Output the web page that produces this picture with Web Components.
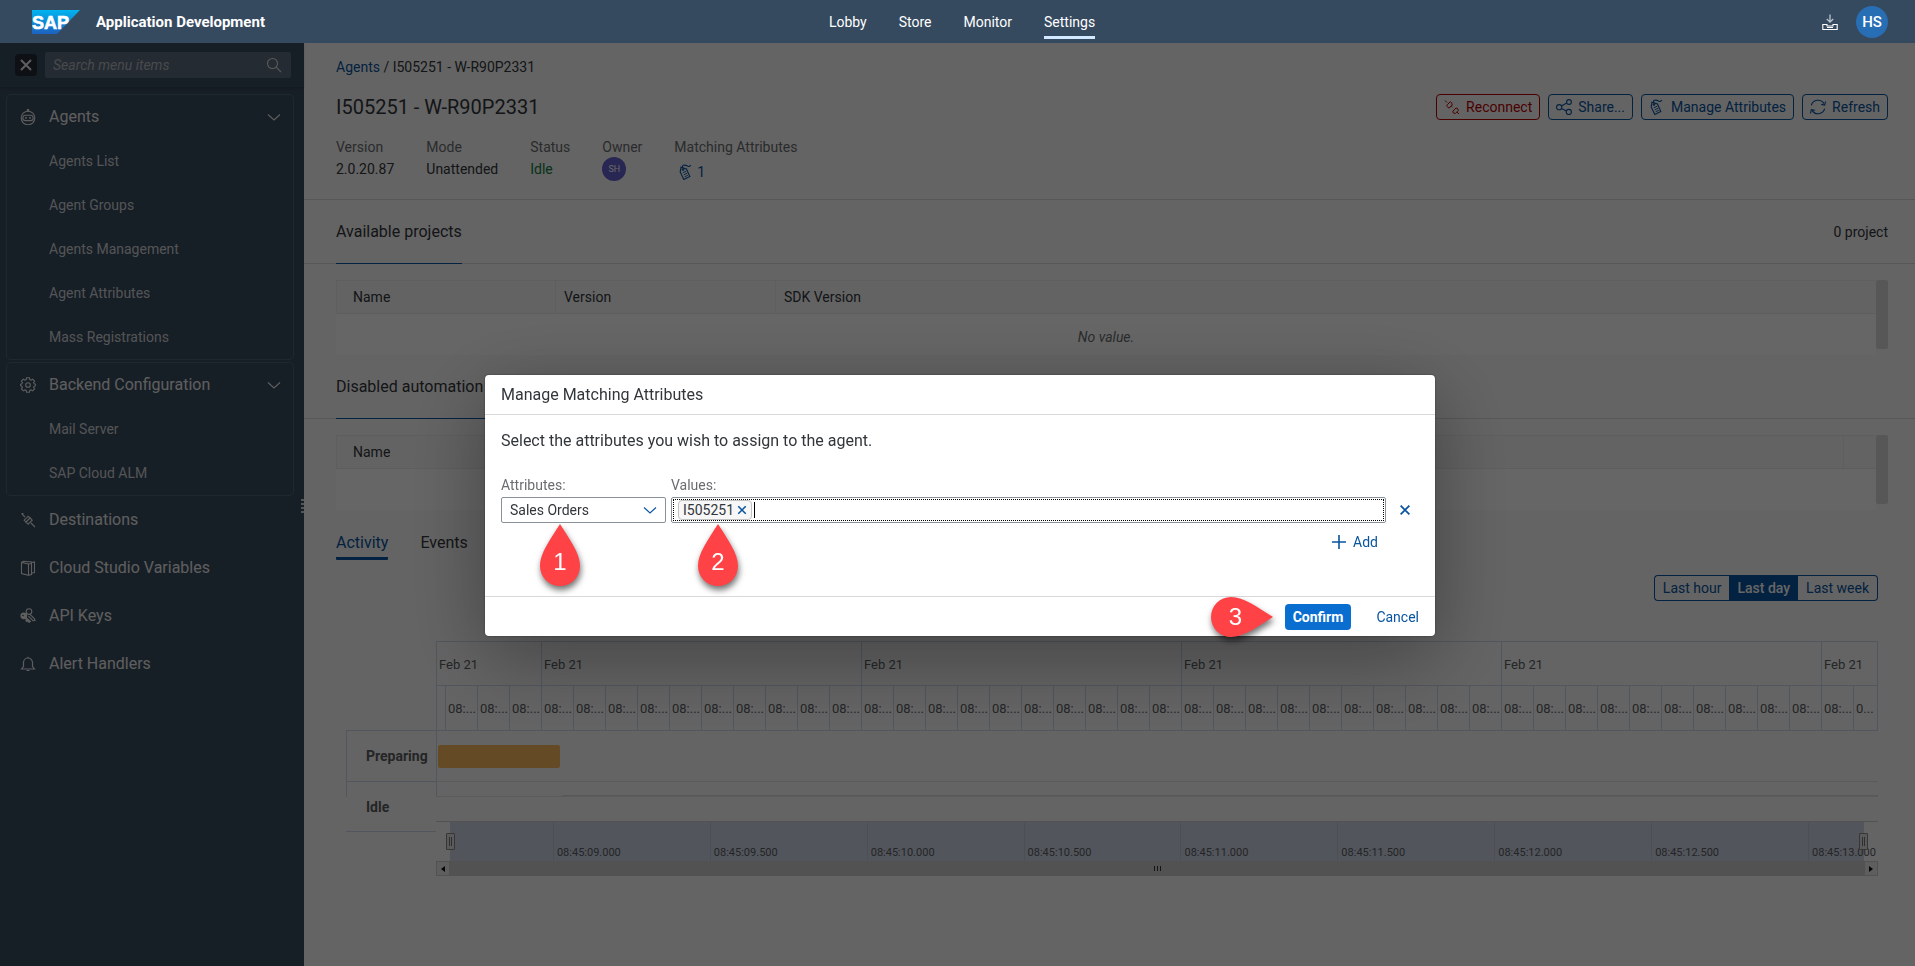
<!DOCTYPE html>
<html lang="en">
<head>
<meta charset="utf-8">
<meta name="viewport" content="width=device-width, initial-scale=1">
<title>Application Development</title>
<style>
  html, body { height: 100%; }
  body { margin: 0; font: 14px/20px Roboto, "Liberation Sans", sans-serif; color: #32363a; background: #fafafa; }
</style>
</head>
<body>
<app-shell></app-shell>

<script>
const define = (name, html, setup) => customElements.define(name, class extends HTMLElement {
  connectedCallback() {
    if (this.shadowRoot) return;
    const root = this.attachShadow({ mode: 'open' });
    root.innerHTML = '<style>*{box-sizing:border-box}</style>' + (typeof html === 'function' ? html(this) : html);
    if (setup) setup(root, this);
  }
});

/* Line icons on a 16 x 16 grid, drawn with the current colour */
const ICONS = {
  robot: '<circle cx="8" cy="9" r="6.800"/><circle cx="8" cy="1.200" r=".8" fill="currentColor"/><rect x="2.800" y="6.200" width="10.400" height="5.400" rx="2.700"/><path d="M5.200 8.900h1.600M9.200 8.900h1.600" stroke-width="1.800"/>',
  gear: '<circle cx="8" cy="8" r="2.300"/><path d="M6.600.8h2.800l.4 1.800 1.300.5 1.600-1 1.900 1.900-1 1.600.5 1.300 1.700.4v1.400l-1.700.4-.5 1.300 1 1.600-1.900 1.900-1.600-1-1.300.5-.4 1.800H6.600l-.4-1.800-1.300-.5-1.600 1L1.400 12l1-1.600-.5-1.300L.6 8.700V7.300l1.300-.4.5-1.300-1-1.600L3.300 2.100l1.600 1 1.300-.5z"/>',
  plug: '<path d="M1.500 1.500l3.500 3.500M11 11l4 4M4.200 8.200l4-4 1 1a2.500 2.500 0 0 1 2 2l1 1-4 4-1-1a3 3 0 0 1-2-2zM6 10l4-4M1.500 1.500h2"/>',
  books: '<path d="M1.500 2.500l2-1.300 8 .8v2M1.500 2.500v11l7 1.700V4zM8.500 4l3-.5M8.500 15.200l3-.7V3.500M11.500 2.500l3-.5v10.500l-3 .7"/>',
  keys: '<circle cx="9" cy="3.600" r="2.800"/><path d="M9.500 5.800l4.800 4.800.7 1.900-2 .2-4.600-4.600"/><circle cx="3.800" cy="7.800" r="2.400" fill="currentColor" stroke-width="2"/><path d="M5 9.500l5.500 4.500M7.500 11.500l-1.500 2M9.500 12.500l-1 2" stroke-width="2.200"/><circle cx="3" cy="7.500" r=".8" fill="#394b5f" stroke="none"/>',
  bell: '<path d="M1.500 13h13l-2-2.500V6.500a4.500 4.500 0 0 0-9 0v4zM6.500 14.500h3M8 .8v1.200" stroke-width="1.200"/>',
  search: '<circle cx="6.500" cy="6.500" r="5"/><path d="M10.200 10.200l4.800 4.800"/>',
  close: '<path d="M3 3l10 10M13 3L3 13" stroke-width="2"/>',
  chevron: '<path d="M2 5.500l6 5.500 6-5.500"/>',
  plus: '<path d="M8 1v14M1 8h14" stroke-width="1.600"/>',
  tray: '<path d="M8 .5v7M4.800 5L8 8l3.200-3" stroke="#b9c4cf" stroke-width="1.300"/><path d="M3 10.500H.8v5h14.400v-5H13M3 10.500h2v1.500h6v-1.500h2M5 13.500h6" stroke-width="1.100"/>',
  reconnect: '<path d="M1 1.500l2 2M3.200 5.800l3-3M3.200 5.800c-.8 1 .2 3 2 3.200l3-3C8 4 7 2.500 6.200 2.800M7.200 7l1.200 1.200M8.800 12.200l3.200-3.200 1.600.6.800 1.800-3.200 3.200-1.800-.6zM13 13l2 2" stroke-width="1"/>',
  share: '<circle cx="3.200" cy="8.200" r="2.600"/><circle cx="13" cy="3" r="2.400"/><circle cx="12.800" cy="13" r="2.600"/><path d="M5.500 7l5.200-3M5.500 9.400l5 2.500"/>',
  tag: '<path d="M3 3.200L2.200 8l3.600 7.500 6-3L8.500 5z"/><path d="M5 4c-2-3 2-3.500 4-2.200s3 .5 3.800-.8"/><circle cx="5" cy="5.500" r=".8"/><path d="M4.800 8.800l3.500-1.600M5.800 10.800l3.500-1.600M6.600 12.800l3.200-1.500" stroke-width=".9"/>',
  refresh: '<path d="M1.300 6.300A7 7 0 0 1 14 4.600M14.700 9.700A7 7 0 0 1 2 11.400"/><path d="M15.500 2.500l-.8 3.500-3.500-.6M.5 14.500l.8-3.900 3.500.8"/>'
};
define('ui-icon', el => `
  <style>:host{display:inline-flex;width:16px;height:16px;flex:none} svg{width:100%;height:100%;display:block}</style>
  <svg viewBox="0 0 16 16" fill="none" stroke="currentColor" stroke-width="1.100" aria-hidden="true">${ICONS[el.getAttribute('name')]}</svg>`);

define('shell-bar', `
  <style>
    :host{display:flex;align-items:center;height:43px;background:#354a5f;color:#fff;position:relative;z-index:3}
    .side{flex:1;display:flex;align-items:center}
    .brand{padding-left:32px;gap:16px}
    .brand svg{width:48px;height:24px}
    h1{margin:0;font-size:15px;line-height:20px;font-weight:700}
    nav{display:flex;gap:32px;height:43px;padding-left:4px}
    nav a{color:#fff;text-decoration:none;font-weight:400;line-height:44px;height:39px;border-bottom:3px solid transparent}
    nav a[aria-current]{border-color:#d1e8ff}
    .tools{justify-content:flex-end;gap:18px;padding-right:27px}
    button{border:0;background:none;padding:0;color:#fff;display:flex;font:500 15px/32px Roboto,sans-serif}
    .me{width:32px;height:32px;border-radius:50%;background:#286eb4;justify-content:center}
  </style>
  <div class="side brand">
    <svg viewBox="0 0 48 24" role="img" aria-label="SAP">
      <defs><linearGradient id="g" x2="0" y2="1"><stop stop-color="#00b4f0"/><stop offset="1" stop-color="#1d61bf"/></linearGradient></defs>
      <path d="M0 0h48L25 24H0z" fill="url(#g)"/>
      <text x="0" y="19" font-family="Liberation Sans, sans-serif" font-weight="700" font-size="18" fill="#fff" stroke="#fff" stroke-width=".6">SAP</text>
    </svg>
    <h1>Application Development</h1>
  </div>
  <nav><a href="#lobby">Lobby</a><a href="#store">Store</a><a href="#monitor">Monitor</a><a href="#settings" aria-current="page">Settings</a></nav>
  <div class="side tools">
    <button aria-label="Downloads"><ui-icon name="tray"></ui-icon></button>
    <button class="me">HS</button>
  </div>`);

define('nav-item', el => `
  <style>
    :host{display:block}
    a{display:flex;align-items:center;color:#ececec;text-decoration:none;font-size:16px;height:48px;padding:0 11px 0 20px}
    :host([head]) a{height:44px;padding-left:13px}
    :host([sub]) a{height:44px;padding-left:42px;font-size:14px;color:#d0d3d6}
    span{flex:1} ui-icon{margin-right:13px} .chev{margin:0}
  </style>
  <a href="#">${el.getAttribute('icon') ? `<ui-icon name="${el.getAttribute('icon')}"></ui-icon>` : ''}<span><slot></slot></span>${el.hasAttribute('head') ? '<ui-icon class="chev" name="chevron"></ui-icon>' : ''}</a>`);

define('nav-group', `
  <style>:host{display:block;margin:0 10px 0 6px;border:1px solid rgba(255,255,255,.13);border-radius:5px}</style><slot></slot>`);

define('side-nav', `
  <style>
    :host{display:block;width:304px;flex:none;background:#394b5f;position:relative}
    .find{display:flex;align-items:center;gap:8px;height:44px;padding:0 13px 0 15px;margin-bottom:7px;box-shadow:0 2px 2px rgba(0,0,0,.12)}
    .x{width:22px;height:22px;border:0;border-radius:4px;background:#222c38;color:#ececec;padding:3px;display:flex}
    label{flex:1;display:flex;align-items:center;height:26px;background:#5c6c7f;border-radius:2px;padding:0 9px 0 8px;color:#dedede}
    input{flex:1;min-width:0;border:0;background:none;outline:0;padding:0;font:italic 14px/20px Roboto,sans-serif;color:#fff}
    input::placeholder{color:#b4b8bd;opacity:1}
    nav-group + nav-group{margin-top:2px}
    .grip{position:absolute;right:0;top:456px;width:3px;height:15px;background:repeating-linear-gradient(#d8d8d8 0 2px,transparent 2px 4px)}
  </style>
  <div class="find"><button class="x" aria-label="Close menu"><ui-icon name="close"></ui-icon></button>
    <label><input placeholder="Search menu items" aria-label="Search menu items"><ui-icon name="search"></ui-icon></label></div>
  <nav-group>
    <nav-item head icon="robot">Agents</nav-item>
    <nav-item sub>Agents List</nav-item><nav-item sub>Agent Groups</nav-item><nav-item sub>Agents Management</nav-item>
    <nav-item sub>Agent Attributes</nav-item><nav-item sub>Mass Registrations</nav-item>
  </nav-group>
  <nav-group>
    <nav-item head icon="gear">Backend Configuration</nav-item>
    <nav-item sub>Mail Server</nav-item><nav-item sub>SAP Cloud ALM</nav-item>
  </nav-group>
  <nav-item icon="plug">Destinations</nav-item>
  <nav-item icon="books">Cloud Studio Variables</nav-item>
  <nav-item icon="keys">API Keys</nav-item>
  <nav-item icon="bell">Alert Handlers</nav-item>
  <div class="grip"></div>`);

define('action-button', el => `
  <style>
    :host{display:block}
    button{display:flex;align-items:center;gap:6px;height:26px;padding:0 7px;border:1px solid #0854a0;border-radius:4px;background:none;color:#0854a0;font:14px/20px Roboto,sans-serif;white-space:nowrap}
    :host([negative]) button{border-color:#b00;color:#b00}
  </style>
  <button><ui-icon name="${el.getAttribute('icon')}"></ui-icon><slot></slot></button>`);

define('agent-header', `
  <style>
    :host{display:block;padding:14px 27px 18px 32px;border-bottom:1px solid #d9d9d9}
    a{color:#0854a0;text-decoration:none}
    .bar{display:flex;align-items:center;gap:8px;margin:17px 0}
    h2{margin:0;flex:1;font-size:20px;line-height:26px;font-weight:400}
    dl{display:flex;gap:32px;margin:0} dt{color:#6a6d70} dd{margin:0;height:24px;line-height:24px}
    .idle{color:#107e3e}
    .who{width:24px;height:24px;border-radius:50%;background:#6560cf;color:#fff;font-size:9px;text-align:center}
    .match{display:flex;align-items:center;gap:3px;padding:6px 4px 0;color:#0854a0}
  </style>
  <div><a href="#agents">Agents</a> / I505251 - W-R90P2331</div>
  <div class="bar"><h2>I505251 - W-R90P2331</h2>
    <action-button negative icon="reconnect">Reconnect</action-button>
    <action-button icon="share">Share...</action-button>
    <action-button icon="tag">Manage Attributes</action-button>
    <action-button icon="refresh">Refresh</action-button></div>
  <dl>
    <div><dt>Version</dt><dd>2.0.20.87</dd></div>
    <div><dt>Mode</dt><dd>Unattended</dd></div>
    <div><dt>Status</dt><dd class="idle">Idle</dd></div>
    <div><dt>Owner</dt><dd class="who">SH</dd></div>
    <div><dt>Matching Attributes</dt><dd class="match"><ui-icon name="tag"></ui-icon>1</dd></div>
  </dl>`);

define('project-section', el => {
  const cols = el.getAttribute('columns').split(',');
  return `
  <style>
    :host{display:block}
    header{display:flex;justify-content:space-between;line-height:64px;padding:0 27px 0 32px;box-shadow:inset 0 -1px #d9d9d9}
    h3{margin:0;font-size:16px;font-weight:400;box-shadow:inset 0 -1px #0854a0}
    :host([wide]) h3{padding-right:32px}
    .wrap{display:flex;align-items:flex-start;margin:16px 27px 0 32px}
    table{flex:1;border-spacing:0;table-layout:fixed;width:100%;background:#fff}
    th{height:34px;padding:0 0 0 8px;text-align:left;font-weight:400;background:#f7f7f7;border:solid #ececec;border-width:1px 1px 1px 0}
    th:first-child{padding-left:16px;border-left-width:1px}
    th:last-child{border-right:0}
    td{height:41px;padding:5px 0 0;text-align:center;font-style:italic;color:#6a6d70}
    .bar{width:12px;height:69px;border-radius:2px;background:#d9d9d9}
  </style>
  <header><h3><slot></slot></h3><span>${el.getAttribute('count') || ''}</span></header>
  <div class="wrap"><table>
    <colgroup><col style="width:220px"><col style="width:220px"><col>${cols.length > 3 ? '<col style="width:32px">' : ''}</colgroup>
    <thead><tr>${cols.map(c => `<th>${c}</th>`).join('')}</tr></thead>
    <tbody><tr><td colspan="${cols.length}">No value.</td></tr></tbody></table><div class="bar"></div></div>`;
});

define('activity-tabs', `
  <style>
    :host{display:block;padding:21px 37px 0 32px}
    nav{display:flex;gap:32px;font-size:16px;line-height:24px;font-weight:400}
    nav a{color:#32363a;text-decoration:none;padding-bottom:2px;border-bottom:3px solid transparent;border-radius:1px}
    nav a[aria-current]{color:#0854a0;border-color:#0854a0}
    .seg{display:flex;justify-content:flex-end;margin-top:15px}
    button{height:26px;padding:0 8px;border:1px solid #0854a0;background:none;color:#0854a0;font:14px/20px Roboto,sans-serif}
    button:first-child{border-radius:4px 0 0 4px;border-right:0} button:last-child{border-radius:0 4px 4px 0;border-left:0}
    .on{background:#0854a0;color:#fff;font-weight:500;padding:0 7px}
  </style>
  <nav><a href="#activity" aria-current="page">Activity</a><a href="#events">Events</a></nav>
  <div class="seg"><button>Last hour</button><button class="on" aria-pressed="true">Last day</button><button>Last week</button></div>`);

define('activity-chart', () => {
  const ticks = '<span></span>' + '<span>08:...</span>'.repeat(44) + '<span>0...</span>';
  const marks = ['09.000', '09.500', '10.000', '10.500', '11.000', '11.500', '12.000', '12.500', '13.000'];
  return `
  <style>
    :host{display:grid;grid-template-columns:90px 1fr;margin:40px 37px 0 42px;font-size:13px;color:#5a5d60;--line:#ccd6eb}
    .labels{padding-top:89px;font-weight:700;font-size:14px}
    .labels div{line-height:50px;padding-left:20px;height:51px;border-top:1px solid var(--line)}
    .labels .prep{border-left:1px solid var(--line);padding-left:19px}
    .labels .idle{border-bottom:1px solid var(--line);background:linear-gradient(var(--line),var(--line)) 0 0/1px 15px no-repeat}
    .plot{min-width:0}
    .days,.ticks{display:grid;border-top:1px solid var(--line)}
    .days{grid-template-columns:105fr repeat(4,320fr) 57fr;height:44px}
    .ticks{grid-template-columns:9fr repeat(44,32fr) 25fr;height:45px}
    .days span,.ticks span{min-width:0;overflow:hidden;white-space:nowrap;border-left:1px solid var(--line);padding-left:2px;line-height:46px}
    .days span:last-child,.ticks span:last-child{border-right:1px solid var(--line)}
    .run{height:51px;border:solid var(--line);border-width:1px 0 0 1px;padding:14px 1px}
    .run i{display:block;width:122px;height:23px;border-radius:2px;background:#fabb60}
    .stub{height:16px;border:solid #e4e4e4;border-width:1px 0;border-left:1px solid var(--line);background:linear-gradient(#dcdcdc,#dcdcdc) 125px 100%/100% 1px no-repeat}
    .range{display:grid;grid-template-columns:14px 1fr 14px;margin-top:24px;border-top:1px solid #cdcdcd}
    .mask{grid-column:2;display:grid;grid-template-columns:103fr repeat(8,157fr) 56fr;height:39px;background:#cdd5e6;position:relative;font-size:11px}
    .mask span{border-left:1px solid #bfc6d8;padding:23px 0 0 3px;line-height:16px;white-space:nowrap;min-width:0}
    .mask span:first-child{border:0}
    .h{position:absolute;top:11px;width:9px;height:17px;border:1px solid #888;background:#e2e2e2;border-radius:1px}
    .h::after{content:"";position:absolute;inset:3px 2px;border:solid #777;border-width:0 1px}
    .l{left:-4px}.r{right:-4px}
    .scroll{grid-column:1/-1;display:flex;height:15px;background:#cdcdcd;justify-content:space-between;align-items:stretch}
    .scroll button{width:14px;border:1px solid #cdcdcd;background:#ebebeb;padding:0;display:grid;place-items:center}
    .scroll svg{width:4px;height:6px;fill:#111}
    .grip{align-self:center;width:7px;height:5px;background:repeating-linear-gradient(90deg,#333 0 1px,transparent 1px 3px)}
  </style>
  <div class="labels"><div class="prep">Preparing</div><div class="idle">Idle</div></div>
  <div class="plot">
    <div class="days">${'<span>Feb 21</span>'.repeat(6)}</div>
    <div class="ticks">${ticks}</div>
    <div class="run"><i></i></div>
    <div class="stub"></div>
    <div class="range">
      <div class="mask"><span></span>${marks.map(m => `<span>08:45:${m}</span>`).join('')}<b class="h l"></b><b class="h r"></b></div>
      <div class="scroll"><button aria-label="Scroll left"><svg viewBox="0 0 4 6"><path d="M4 0v6L0 3z"/></svg></button><div class="grip"></div><button aria-label="Scroll right"><svg viewBox="0 0 4 6"><path d="M0 0v6l4-3z"/></svg></button></div>
    </div>
  </div>`;
});

/* Numbered callout; its tip points up, or to the right with the attribute "right" */
define('step-pin', el => {
  const right = el.hasAttribute('right');
  const shape = right ? 'M62 20C46 10 33 0 20 0a20 20 0 0 0 0 40C33 40 46 30 62 20z' : 'M20 0C10 16 0 29 0 42a20 20 0 0 0 40 0C40 29 30 16 20 0z';
  return `
  <style>
    :host{position:absolute;width:${right ? 62 : 40}px;height:${right ? 40 : 62}px;filter:drop-shadow(1px 4px 3px rgba(0,0,0,.55));z-index:2;pointer-events:none}
    svg{position:absolute;inset:0;width:100%;height:100%;fill:#ff4245}
    b{position:absolute;${right ? 'left:4px;top:0' : 'left:0;bottom:4px'};width:40px;text-align:center;font:400 24px/40px "Liberation Sans",sans-serif;color:#fff}
  </style>
  <svg viewBox="0 0 ${right ? '62 40' : '40 62'}"><path d="${shape}"/></svg><b><slot></slot></b>`;
});

define('attribute-dialog', `
  <style>
    :host{display:block;width:950px;max-width:100%;background:#fff;border-radius:4px;box-shadow:0 20px 80px rgba(0,0,0,.35),0 0 2px rgba(0,0,0,.5);color:#32363a}
    h2{margin:0;padding:0 16px;font-size:16px;line-height:39px;font-weight:400;border-bottom:1px solid #d9d9d9}
    .body{padding:14px 16px 0;height:181px}
    p{margin:0 0 22px;font-size:16px;line-height:24px}
    .row{display:grid;grid-template-columns:165px 1fr 28px;column-gap:5px}
    label{color:#6a6d70;line-height:20px;padding-bottom:2px}
    .cell{position:relative;grid-row:2}
    select{appearance:none;width:100%;height:26px;border:1px solid #89919a;border-radius:2px;background:#fff;padding:0 8px;font:14px/20px Roboto,sans-serif;color:#32363a}
    .cell>ui-icon{position:absolute;right:8px;top:5px;color:#0854a0;pointer-events:none}
    .field{display:flex;align-items:center;height:26px;border:1px solid #89919a;border-radius:2px;padding:1px}
    .in{flex:1;display:flex;align-items:center;height:22px;border:1px dotted #000;padding:0 4px}
    .tok{display:flex;align-items:center;gap:2px;height:20px;border:1px solid #c2c2c2;border-radius:4px;background:#f7f7f7;padding:0 3px 0 4px;margin-right:2px}
    .tok button{width:12px;height:12px} .tok ui-icon{width:12px;height:12px}
    .caret{width:1px;height:16px;background:#000}
    input{flex:1;min-width:0;border:0;outline:0;padding:0;font:14px/18px Roboto,sans-serif}
    button{border:0;background:none;padding:0;color:#0854a0;font:14px/20px Roboto,sans-serif;display:flex;align-items:center}
    .del{justify-content:center;width:28px;height:26px;grid-row:2;grid-column:3} .del ui-icon{width:14px;height:14px}
    .add{margin:9px 41px 0 auto;gap:6px}
    footer{display:flex;justify-content:flex-end;align-items:center;gap:17px;height:40px;border-top:1px solid #d9d9d9;padding:0 8px}
    footer button{height:26px;padding:0 8px}
    .ok{background:#0a6ed1;color:#fff;border-radius:4px;font-weight:700}
    .p1{left:39px;top:27px}.p2{left:27px;top:27px}
    .okbox{position:relative} .p3{right:78px;top:-7px}
  </style>
  <h2>Manage Matching Attributes</h2>
  <div class="body">
    <p>Select the attributes you wish to assign to the agent.</p>
    <div class="row">
      <label for="attr">Attributes:</label><label for="val">Values:</label>
      <div class="cell"><select id="attr"><option>Sales Orders</option></select><ui-icon name="chevron"></ui-icon><step-pin class="p1">1</step-pin></div>
      <div class="cell"><div class="field"><div class="in"><span class="tok">I505251<button aria-label="Remove I505251"><ui-icon name="close"></ui-icon></button></span><span class="caret"></span><input id="val"></div></div><step-pin class="p2">2</step-pin></div>
      <button class="del" aria-label="Remove row"><ui-icon name="close"></ui-icon></button>
    </div>
    <button class="add"><ui-icon name="plus"></ui-icon>Add</button>
  </div>
  <footer><div class="okbox"><step-pin class="p3" right>3</step-pin><button class="ok">Confirm</button></div><button>Cancel</button></footer>`,
  (root, el) => { el.setAttribute('role', 'dialog'); el.setAttribute('aria-label', 'Manage Matching Attributes'); });

define('app-shell', `
  <style>
    :host{display:flex;flex-direction:column;min-height:100vh}
    .page{flex:1;display:flex}
    main{flex:1;min-width:0;background:#fafafa}
    .veil{position:fixed;inset:43px 0 0;background:rgba(0,0,0,.6);display:grid;place-items:center;padding:2px 0 0 5px;z-index:2}
  </style>
  <shell-bar></shell-bar>
  <div class="page">
    <side-nav></side-nav>
    <main>
      <agent-header></agent-header>
      <project-section columns="Name,Version,SDK Version" count="0 project">Available projects</project-section>
      <project-section wide columns="Name,,,">Disabled automation</project-section>
      <activity-tabs></activity-tabs>
      <activity-chart></activity-chart>
    </main>
  </div>
  <div class="veil"><attribute-dialog></attribute-dialog></div>`);
</script>
</body>
</html>
